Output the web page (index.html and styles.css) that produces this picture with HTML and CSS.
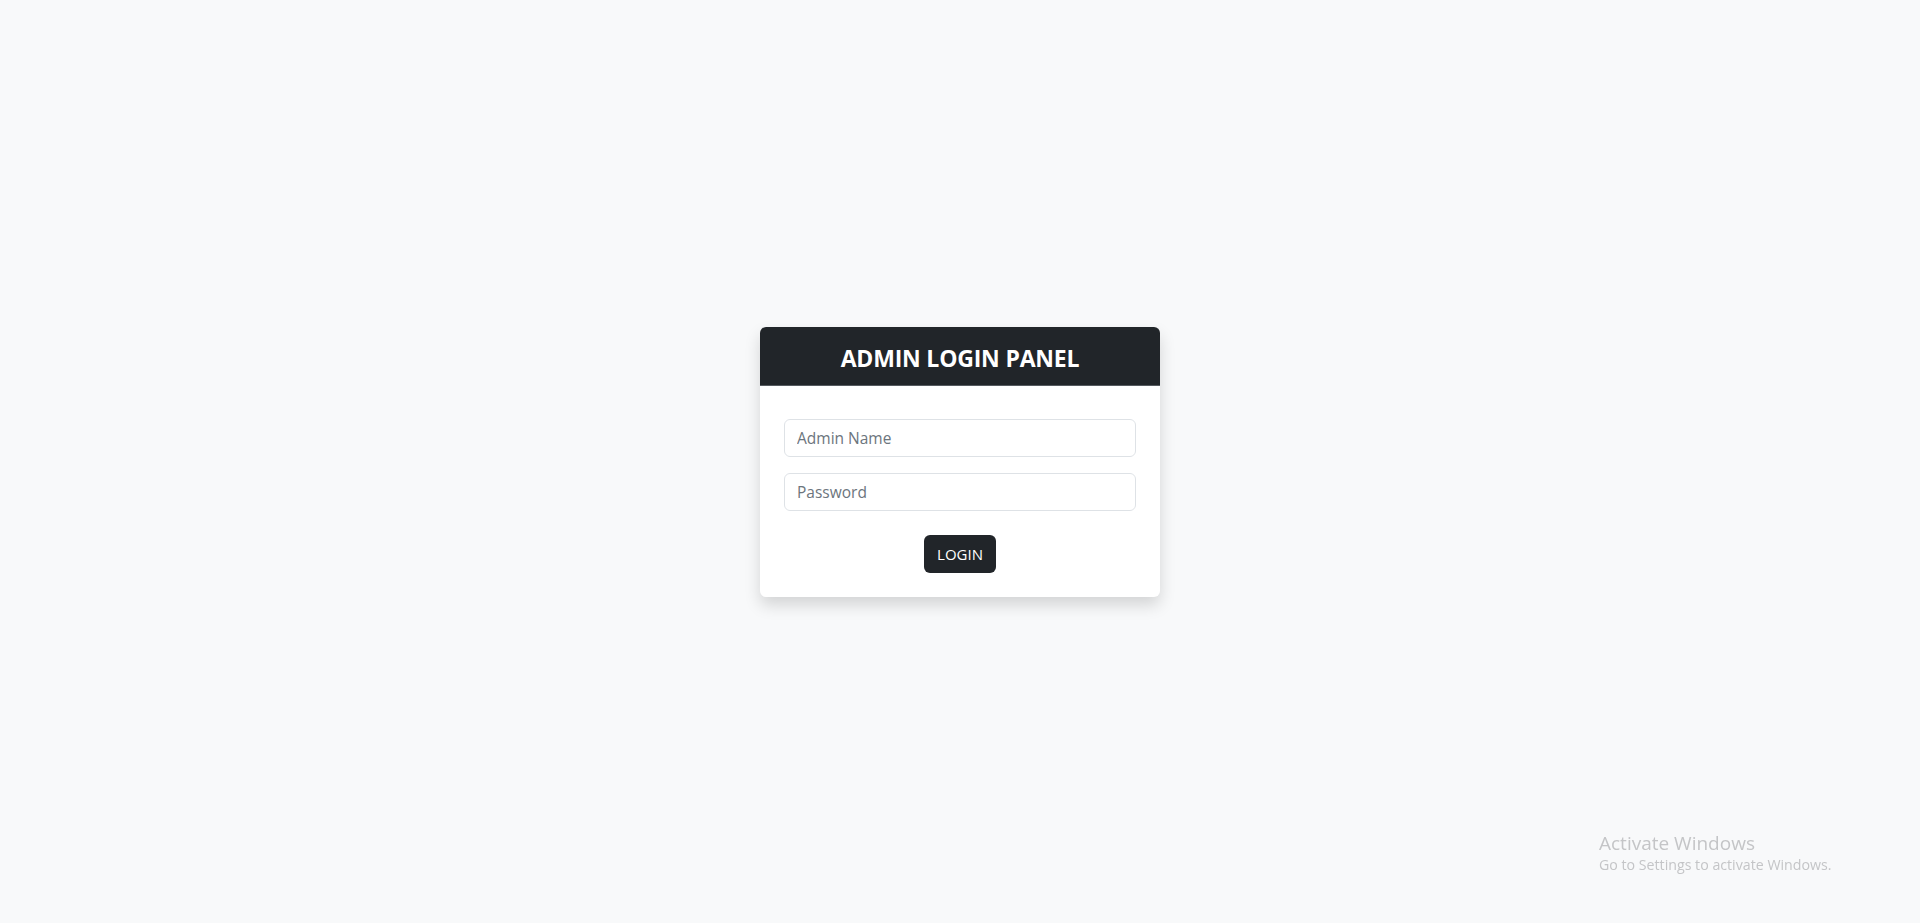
FILE: index.html
```html
<!DOCTYPE html>
<html lang="en">
<head>
<meta charset="utf-8">
<title>Admin Login</title>
<link rel="stylesheet" href="styles.css">
</head>
<body>
<main class="page">
  <div class="card">
    <div class="card-header">
      <h4 class="card-title">ADMIN LOGIN PANEL</h4>
    </div>
    <form class="card-body">
      <input class="form-control" type="text" placeholder="Admin Name">
      <input class="form-control" type="password" placeholder="Password">
      <div class="actions">
        <button class="btn" type="button">LOGIN</button>
      </div>
    </form>
  </div>
</main>
<div class="watermark">
  <div class="wm-title">Activate Windows</div>
  <div class="wm-sub">Go to Settings to activate Windows.</div>
</div>
</body>
</html>
```
FILE: styles.css
```css
* { box-sizing: border-box; }
html, body { margin: 0; height: 100%; }
body {
  background: #f8f9fa;
  font-family: "Open Sans", "Noto Sans", sans-serif;
  color: #212529;
}
.page {
  height: 100%;
  display: flex;
  align-items: center;
  justify-content: center;
}
.card {
  width: 400px;
  background: #fff;
  border-radius: 6px;
  overflow: hidden;
  box-shadow: 0 8px 16px rgba(0,0,0,0.15);
}
.card-header {
  background: #212529;
  height: 59px;
  padding-top: 4px;
  display: flex;
  align-items: center;
  justify-content: center;
  border-bottom: 1px solid #555a5f;
}
.card-title {
  margin: 0;
  color: #fff;
  font-size: 23px;
  font-weight: 700;
  letter-spacing: -0.2px;
}
.card-body {
  padding: 33px 24px 24px;
  display: flex;
  flex-direction: column;
  gap: 16px;
}
.form-control {
  display: block;
  width: 100%;
  height: 38px;
  padding: 6px 12px;
  font-family: inherit;
  font-size: 15.5px;
  color: #212529;
  border: 1px solid #dee2e6;
  border-radius: 6px;
  background: #fff;
}
.form-control::placeholder { color: #6c757d; }
.actions {
  display: flex;
  justify-content: center;
  padding-top: 8px;
}
.btn {
  width: 72px;
  height: 38px;
  padding: 0;
  background: #212529;
  color: #fff;
  border: none;
  border-radius: 6px;
  font-family: inherit;
  font-size: 15px;
}
.watermark {
  position: fixed;
  left: 1599px;
  top: 830px;
  color: #c4c5c7;
  font-family: "Open Sans", "Noto Sans", sans-serif;
}
.wm-title { font-size: 19px; line-height: 26px; }
.wm-sub { font-size: 14.2px; line-height: 18px; }
```
